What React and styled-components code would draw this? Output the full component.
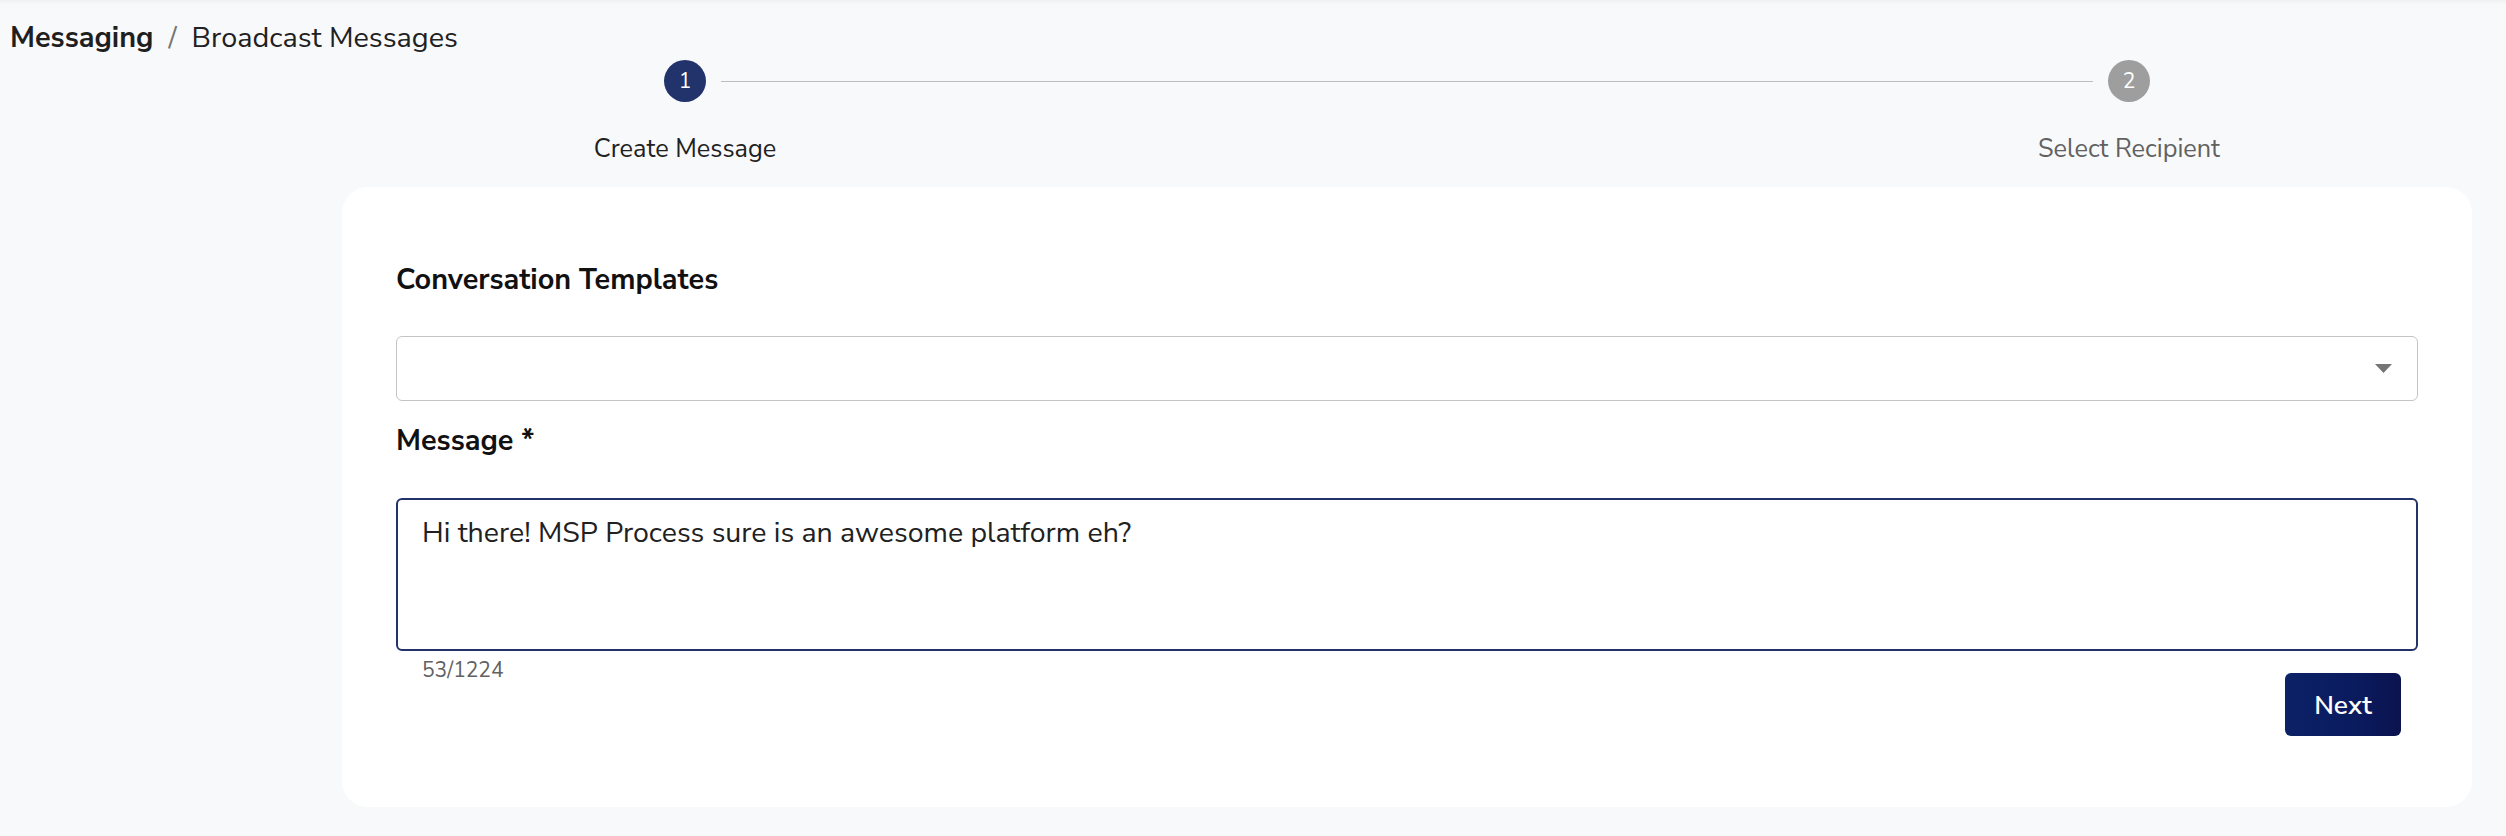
import React from "react";
import styled, { createGlobalStyle } from "styled-components";

const GlobalStyle = createGlobalStyle`
  html, body {
    margin: 0;
    padding: 0;
    background: #f8f9fb;
  }
  body {
    font-family: "Nunito Sans", "Lato", "Noto Sans", sans-serif;
    color: #212121;
  }
  * {
    box-sizing: border-box;
  }
`;

const Page = styled.div`
  min-height: 836px;
  padding: 0 34px 0 10px;
  box-shadow: inset 0 6px 6px -6px rgba(0, 0, 0, 0.08);
`;

const Breadcrumb = styled.nav`
  display: flex;
  align-items: baseline;
  padding-top: 21px;
  font-size: 28.8px;
  line-height: 34px;
  .current {
    font-weight: 700;
    color: #1f1f1f;
  }
  .sep {
    color: #757575;
    margin: 0 15px;
  }
  .page {
    color: #212121;
  }
`;

const Content = styled.main`
  margin-left: 332px;
  display: flex;
  flex-direction: column;
`;

const Stepper = styled.div`
  display: flex;
  align-items: flex-start;
  padding: 5px 307px 0;
`;

const Step = styled.div`
  width: 72px;
  display: flex;
  flex-direction: column;
  align-items: center;
`;

const StepCircle = styled.div`
  width: 42px;
  height: 42px;
  border-radius: 50%;
  background: ${(props) => (props.$active ? "#22336b" : "#9e9e9e")};
  color: #ffffff;
  display: flex;
  align-items: center;
  justify-content: center;
  font-size: 21px;
`;

const StepLabel = styled.span`
  margin-top: 32px;
  white-space: nowrap;
  font-size: 25.3px;
  line-height: 30px;
  color: ${(props) => (props.$active ? "#212121" : "#616161")};
`;

const Connector = styled.span`
  flex: 1;
  height: 1px;
  margin-top: 21px;
  background: #bdbdbd;
`;

const Card = styled.section`
  margin-top: 23px;
  background: #ffffff;
  border-radius: 26px;
  padding: 76px 54px 71px;
  display: flex;
  flex-direction: column;
`;

const FieldLabel = styled.label`
  font-size: 28.8px;
  line-height: 34px;
  font-weight: 700;
  color: #111111;
  margin-bottom: ${(props) => props.$gap || "39px"};
`;

const SelectBox = styled.div`
  height: 65px;
  border: 1px solid #c4c4c4;
  border-radius: 6px;
  display: flex;
  align-items: center;
  justify-content: flex-end;
  padding-right: 25px;
  margin-bottom: 23px;
  svg {
    display: block;
  }
`;

const MessageBox = styled.textarea`
  height: 153px;
  border: 2px solid #22336b;
  border-radius: 6px;
  padding: 16px 24px;
  resize: none;
  outline: none;
  font-family: inherit;
  font-size: 28.5px;
  line-height: 34px;
  color: #212121;
`;

const Footer = styled.div`
  display: flex;
  justify-content: space-between;
  align-items: flex-start;
  margin-top: 7px;
`;

const Counter = styled.span`
  padding-left: 26px;
  font-size: 21px;
  line-height: 24px;
  color: #616161;
`;

const NextButton = styled.button`
  margin-top: 15px;
  margin-right: 17px;
  width: 116px;
  height: 63px;
  border: none;
  border-radius: 6px;
  background: linear-gradient(90deg, #0b2266 0%, #0a1b5e 60%, #0b134f 100%);
  color: #ffffff;
  font-family: inherit;
  font-size: 26.5px;
  font-weight: 600;
  cursor: pointer;
`;

const message = "Hi there! MSP Process sure is an awesome platform eh?";

export default function App() {
  return (
    <>
      <GlobalStyle />
      <Page>
        <Breadcrumb>
          <span className="current">Messaging</span>
          <span className="sep">/</span>
          <span className="page">Broadcast Messages</span>
        </Breadcrumb>
        <Content>
          <Stepper>
            <Step>
              <StepCircle $active>1</StepCircle>
              <StepLabel $active>Create Message</StepLabel>
            </Step>
            <Connector />
            <Step>
              <StepCircle>2</StepCircle>
              <StepLabel>Select Recipient</StepLabel>
            </Step>
          </Stepper>
          <Card>
            <FieldLabel>Conversation Templates</FieldLabel>
            <SelectBox>
              <svg width="17" height="9" viewBox="0 0 17 9">
                <path d="M0 0h17L8.5 9z" fill="#757575" />
              </svg>
            </SelectBox>
            <FieldLabel $gap="40px">Message *</FieldLabel>
            <MessageBox defaultValue={message} />
            <Footer>
              <Counter>{message.length}/1224</Counter>
              <NextButton>Next</NextButton>
            </Footer>
          </Card>
        </Content>
      </Page>
    </>
  );
}
